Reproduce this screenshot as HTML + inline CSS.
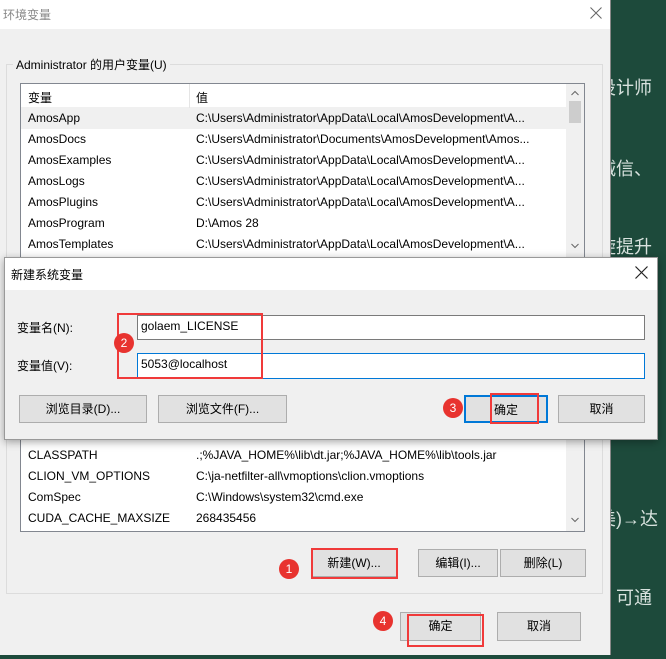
<!DOCTYPE html>
<html><head><meta charset="utf-8"><style>
*{margin:0;padding:0;box-sizing:border-box}
body{width:666px;height:659px;overflow:hidden;position:relative;background:#1d4a3b;font-family:"Liberation Sans","Noto Sans CJK SC",sans-serif;font-size:12px;color:#000}
.a{position:absolute}
.side{color:#d8e2de;font-size:18px;white-space:nowrap}
.btn{position:absolute;background:#e1e1e1;border:1px solid #adadad;text-align:center;font-size:12px}
.row{position:absolute;left:28px;height:21px;line-height:21px;white-space:nowrap}
.v{position:absolute;left:168px;white-space:nowrap}
.red{position:absolute;border:2px solid #f03a3a}
.c{position:absolute;width:20px;height:20px;border-radius:50%;background:#e8332f;color:#fff;text-align:center;line-height:20px;font-size:12px}
</style></head><body>
<div class="side a" style="left:598px;top:74px">设计师</div>
<div class="side a" style="left:598px;top:155px">诚信、</div>
<div class="side a" style="left:598px;top:233px">旋提升</div>
<div class="side a" style="left:598px;top:505px">美)→达</div>
<div class="side a" style="left:598px;top:584px">，可通</div>

<div class="a" style="left:0;top:0;width:611px;height:655px;background:#f0f0f0;border-right:1px solid #888">
  <div class="a" style="left:0;top:0;width:610px;height:29px;background:#fff"></div>
  <div class="a" style="left:3px;top:6px;color:#888;font-size:12px">环境变量</div>
  <svg class="a" style="left:590px;top:7px" width="12" height="12"><path d="M0.5 0.5L11.5 11.5M11.5 0.5L0.5 11.5" stroke="#666" stroke-width="1"/></svg>
  <div class="a" style="left:6px;top:64px;width:597px;height:530px;border:1px solid #dcdcdc"></div>
  <div class="a" style="left:13px;top:56px;background:#f0f0f0;padding:0 3px">Administrator 的用户变量(U)</div>
  <div class="a" style="left:20px;top:83px;width:565px;height:449px;background:#fff;border:1px solid #828790"></div>
  <div class="a" style="left:21px;top:84px;width:545px;height:24px;border-bottom:1px solid #f0f0f0"></div>
  <div class="a" style="left:189px;top:84px;width:1px;height:24px;background:#e5e5e5"></div>
  <div class="a" style="left:28px;top:89px">变量</div>
  <div class="a" style="left:196px;top:89px">值</div>
  <div class="a" style="left:21px;top:108px;width:545px;height:21px;background:#f0f0f0"></div>
  <div class="a" style="left:566px;top:84px;width:18px;height:447px;background:#f0f0f0"></div>
  <div class="a" style="left:569px;top:101px;width:12px;height:22px;background:#cdcdcd"></div>
  <svg class="a" style="left:571px;top:90px" width="8" height="6"><path d="M0.5 5L4 1.5L7.5 5" stroke="#666" fill="none"/></svg>
  <svg class="a" style="left:571px;top:243px" width="8" height="6"><path d="M0.5 1L4 4.5L7.5 1" stroke="#666" fill="none"/></svg>
  <svg class="a" style="left:571px;top:517px" width="8" height="6"><path d="M0.5 1L4 4.5L7.5 1" stroke="#666" fill="none"/></svg>
  <div class="row" style="top:108px">AmosApp<span class="v">C:\Users\Administrator\AppData\Local\AmosDevelopment\A...</span></div>
  <div class="row" style="top:129px">AmosDocs<span class="v">C:\Users\Administrator\Documents\AmosDevelopment\Amos...</span></div>
  <div class="row" style="top:150px">AmosExamples<span class="v">C:\Users\Administrator\AppData\Local\AmosDevelopment\A...</span></div>
  <div class="row" style="top:171px">AmosLogs<span class="v">C:\Users\Administrator\AppData\Local\AmosDevelopment\A...</span></div>
  <div class="row" style="top:192px">AmosPlugins<span class="v">C:\Users\Administrator\AppData\Local\AmosDevelopment\A...</span></div>
  <div class="row" style="top:213px">AmosProgram<span class="v">D:\Amos 28</span></div>
  <div class="row" style="top:234px">AmosTemplates<span class="v">C:\Users\Administrator\AppData\Local\AmosDevelopment\A...</span></div>
  <div class="row" style="top:445px">CLASSPATH<span class="v">.;%JAVA_HOME%\lib\dt.jar;%JAVA_HOME%\lib\tools.jar</span></div>
  <div class="row" style="top:466px">CLION_VM_OPTIONS<span class="v">C:\ja-netfilter-all\vmoptions\clion.vmoptions</span></div>
  <div class="row" style="top:487px">ComSpec<span class="v">C:\Windows\system32\cmd.exe</span></div>
  <div class="row" style="top:508px">CUDA_CACHE_MAXSIZE<span class="v">268435456</span></div>
  <div class="btn" style="left:311px;top:549px;width:86px;height:28px;line-height:26px">新建(W)...</div>
  <div class="btn" style="left:418px;top:549px;width:80px;height:28px;line-height:26px">编辑(I)...</div>
  <div class="btn" style="left:500px;top:549px;width:86px;height:28px;line-height:26px">删除(L)</div>
  <div class="btn" style="left:400px;top:612px;width:81px;height:29px;line-height:27px">确定</div>
  <div class="btn" style="left:497px;top:612px;width:84px;height:29px;line-height:27px">取消</div>
</div>

<div class="a" style="left:4px;top:257px;width:654px;height:183px;background:#f0f0f0;border:1px solid #999;box-shadow:0 2px 8px rgba(0,0,0,.35)">
  <div class="a" style="left:0;top:0;width:652px;height:32px;background:#fff"></div>
  <div class="a" style="left:6px;top:8px">新建系统变量</div>
  <svg class="a" style="left:630px;top:8px" width="13" height="13"><path d="M0.5 0.5L12.5 12.5M12.5 0.5L0.5 12.5" stroke="#222" stroke-width="1.2"/></svg>
  <div class="a" style="left:12px;top:61px">变量名(N):</div>
  <div class="a" style="left:12px;top:99px">变量值(V):</div>
  <div class="a" style="left:132px;top:57px;width:508px;height:25px;background:#fff;border:1px solid #7a7a7a"></div>
  <div class="a" style="left:132px;top:95px;width:508px;height:26px;background:#fff;border:1px solid #0078d7"></div>
  <div class="a" style="left:136px;top:61px">golaem_LICENSE</div>
  <div class="a" style="left:136px;top:99px">5053@localhost</div>
  <div class="btn" style="left:14px;top:137px;width:128px;height:28px;line-height:26px">浏览目录(D)...</div>
  <div class="btn" style="left:153px;top:137px;width:129px;height:28px;line-height:26px">浏览文件(F)...</div>
  <div class="btn" style="left:459px;top:137px;width:84px;height:28px;line-height:26px;border:2px solid #0078d7">确定</div>
  <div class="btn" style="left:553px;top:137px;width:87px;height:28px;line-height:26px">取消</div>
</div>

<div class="red" style="left:311px;top:548px;width:87px;height:31px"></div>
<div class="c" style="left:279px;top:559px">1</div>
<div class="red" style="left:117px;top:313px;width:146px;height:66px"></div>
<div class="c" style="left:114px;top:333px">2</div>
<div class="red" style="left:490px;top:393px;width:49px;height:31px"></div>
<div class="c" style="left:443px;top:398px">3</div>
<div class="red" style="left:407px;top:614px;width:77px;height:33px"></div>
<div class="c" style="left:373px;top:611px">4</div>
</body></html>
